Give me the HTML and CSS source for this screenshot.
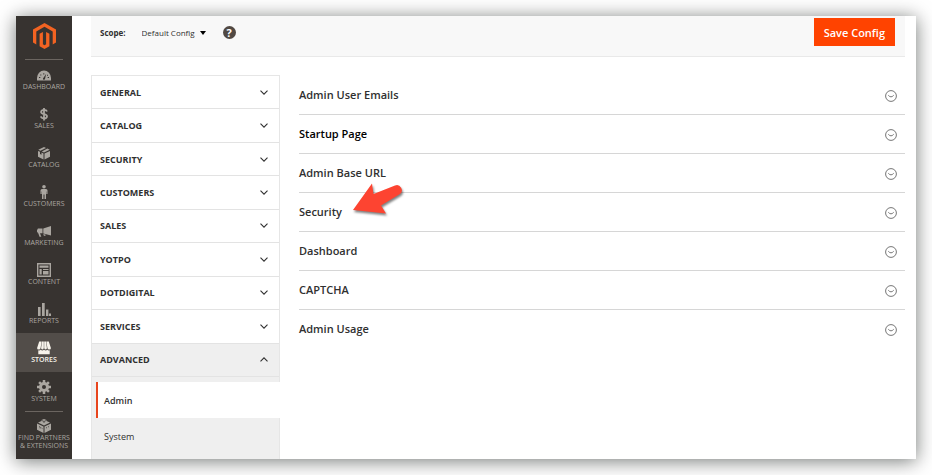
FILE: index.html
```html
<!DOCTYPE html>
<html lang="en">
<head>
<meta charset="utf-8">
<meta name="viewport" content="width=device-width, initial-scale=1">
<title>Configuration</title>
<link rel="stylesheet" href="styles.css">
</head>
<body>
<svg class="sprite" aria-hidden="true">
  <symbol id="down" viewBox="0 0 8 5"><path d="M.5 .7 4 4.2 7.5 .7" fill="none" stroke="currentColor" stroke-width="1.1"/></symbol>
  <symbol id="up" viewBox="0 0 8 5"><path d="M.5 4.3 4 .8 7.5 4.3" fill="none" stroke="currentColor" stroke-width="1.1"/></symbol>
  <symbol id="expand" viewBox="0 0 12 12"><g fill="none" stroke="currentColor" stroke-width=".9"><circle cx="6" cy="6" r="5.4"/><path d="M3.3 5.3Q6 8.4 8.7 5.3"/></g></symbol>
</svg>
<div class="frame">
  <nav class="menu" aria-label="Main">
    <a class="logo" href="#" aria-label="Magento">
      <svg viewBox="0 0 23 26"><path fill="#f26322" d="M11.5 0 23 6.6V19.500L19.700 21.400V8.500L11.500 3.800 3.300 8.500V21.400L0 19.500V6.600ZM9.900 9V21.300L11.500 22.300 13.100 21.300V9L16.400 10.700V23.200L11.500 26 6.600 23.200V10.700Z"/></svg>
    </a>
    <a class="item" href="#"><svg viewBox="0 0 14 14"><path d="M0 12.500V10A7 7.500 0 0 1 14 10V12.500Z"/><path class="cut" d="M6 10.400 9.200 5.800 8 11.100A1 1 0 0 1 6 10.400ZM2 9h1.300v1H2ZM10.700 9H12v1h-1.300ZM3.300 6.500h1v1h-1ZM6.300 5.200h1v1.200h-1ZM10 6.700h1v1h-1Z"/></svg>Dashboard</a>
    <a class="item" href="#"><svg viewBox="0 0 14 14"><path fill="none" stroke="currentColor" stroke-width="1.8" d="M10 4.600C9.600 3.300 8.500 2.800 7 2.800 5.200 2.800 4.100 3.600 4.100 4.900 4.100 7.700 10 6.300 10 9.200 10 10.600 8.800 11.400 7 11.400 5.300 11.400 4.200 10.700 3.900 9.400M7 1V13.400"/></svg>Sales</a>
    <a class="item" href="#"><svg viewBox="0 0 14 14"><path d="M7 1 9 1.900 3.400 4.700 1.300 3.800ZM10.400 2.500 12.700 3.800 7 6.500 4.800 5.400ZM1 4.900 3 5.800V8L4.500 8.700V6.500L6.500 7.500V13.500L1 10.700ZM13 4.900V10.700L7.500 13.500V7.500Z"/></svg>Catalog</a>
    <a class="item" href="#"><svg viewBox="0 0 14 14"><circle cx="7" cy="1.800" r="1.800"/><path d="M5 4H9Q10.500 4 10.500 5.500V9H9.300V6.500H9V14H7.500V9.500H6.500V14H5V6.500H4.700V9H3.500V5.500Q3.500 4 5 4Z"/></svg>Customers</a>
    <a class="item" href="#"><svg viewBox="0 0 14 14"><path d="M14 2V11.500L6.300 9.400V4.400ZM5.500 4.600V9.200H3L4.300 12.700H2.500L1.300 9.200H.8V8.300H0V5.600H.8V4.600Z"/><path d="M6.300 10 8.800 10.700 8.100 12 6.700 11.500Z"/></svg>Marketing</a>
    <a class="item" href="#"><svg viewBox="0 0 14 14"><path fill="none" stroke="currentColor" stroke-width="1.400" d="M.700 .700H13.300V13.300H.700Z"/><path d="M2.500 2.500H11.500V4.800H2.500ZM2.500 6H4.700V11.500H2.500ZM6 6H11.500V7H6ZM6 8H11.500V11.500H6Z"/></svg>Content</a>
    <a class="item" href="#"><svg viewBox="0 0 14 14"><path d="M1 5H3.600V14H1ZM5 1H7.700V14H5ZM9 7.500H11.400V14H9ZM12 11.500H14V14H12Z"/></svg>Reports</a>
    <a class="item current" href="#" aria-current="page"><svg viewBox="0 0 14 14"><path d="M2.200 .500H4.600L3.600 7Q3.400 8.500 1.700 8.500 0 8.500 .1 7ZM5 .500H6.800V7.100Q6.700 8.500 5.400 8.500 4 8.500 4.100 7.100ZM7.200 .500H9L9.900 7.100Q10 8.500 8.600 8.500 7.300 8.500 7.200 7.100ZM9.400 .500H11.800L13.900 7Q14 8.500 12.300 8.500 10.600 8.500 10.400 7ZM1.300 9.300Q3 9.600 3.600 8.800 5.300 10 7 8.800 8.700 10 10.400 8.800 11 9.600 12.700 9.300V13.200H1.300Z"/></svg>Stores</a>
    <a class="item" href="#"><svg viewBox="0 0 14 14"><circle cx="7" cy="7" r="3.500" fill="none" stroke="currentColor" stroke-width="3"/><path fill="none" stroke="currentColor" stroke-width="2.500" d="M7 0V3M7 11V14M0 7H3M11 7H14M2.100 2.100 4.200 4.200M9.800 9.800 11.900 11.900M11.900 2.100 9.800 4.200M4.200 9.800 2.100 11.900"/></svg>System</a>
    <a class="item partners" href="#"><svg viewBox="0 0 14 14"><path d="M7 0 9.500 1V2L13 3.600 7 6.500 1 3.600 4.500 2V1ZM0 4.500 6.500 7.500V14L0 10.800ZM14 4.500V10.800L7.500 14V7.500Z"/><path fill="none" stroke="#373330" stroke-width=".7" d="M4.600 1.400 7 2.500 9.400 1.400M7 2.500V4M2 7.500 3.200 8 3.200 9.500M4.500 9 5.500 9.600M9 9 10 8.500M11 8 12 7.500"/></svg>Find Partners<br>&amp; Extensions</a>
  </nav>
  <main class="page">
    <header class="toolbar">
      <label for="scope">Scope:</label>
      <span class="scope"><select id="scope"><option>Default Config</option></select></span>
      <button class="help" type="button" aria-label="Help">?</button>
      <button class="save" type="button">Save Config</button>
    </header>
    <div class="columns">
      <nav class="config" aria-label="Configuration">
        <div class="groups">
          <button type="button">General<svg><use href="#down"/></svg></button>
          <button type="button">Catalog<svg><use href="#down"/></svg></button>
          <button type="button">Security<svg><use href="#down"/></svg></button>
          <button type="button">Customers<svg><use href="#down"/></svg></button>
          <button type="button">Sales<svg><use href="#down"/></svg></button>
          <button type="button">Yotpo<svg><use href="#down"/></svg></button>
          <button type="button">dotdigital<svg><use href="#down"/></svg></button>
          <button type="button">Services<svg><use href="#down"/></svg></button>
          <button type="button" class="open" aria-expanded="true">Advanced<svg><use href="#up"/></svg></button>
        </div>
        <div class="pages">
          <a href="#" class="active" aria-current="page">Admin</a>
          <a href="#">System</a>
        </div>
      </nav>
      <section class="sections">
        <button type="button">Admin User Emails<svg><use href="#expand"/></svg></button>
        <button type="button" class="hovered">Startup Page<svg><use href="#expand"/></svg></button>
        <button type="button">Admin Base URL<svg><use href="#expand"/></svg></button>
        <div class="marked">
          <button type="button">Security<svg><use href="#expand"/></svg></button>
          <svg class="arrow" viewBox="0 0 54 36" aria-hidden="true"><path fill="#fd4431" d="M1 28 20 1.500 21.500 12 43 3.500A5 5 0 0 1 48 12L29 23.500 34 31.500Z"/></svg>
        </div>
        <button type="button">Dashboard<svg><use href="#expand"/></svg></button>
        <button type="button">CAPTCHA<svg><use href="#expand"/></svg></button>
        <button type="button">Admin Usage<svg><use href="#expand"/></svg></button>
      </section>
    </div>
  </main>
</div>
</body>
</html>
```
FILE: styles.css
```css
* { box-sizing: border-box; }
body {
  margin: 0;
  padding: 16px;
  background: #fff;
  color: #303030;
  font-family: "Open Sans", "Noto Sans", sans-serif;
  font-size: 9px;
}
button, select {
  margin: 0;
  padding: 0;
  border: 0;
  background: none;
  color: inherit;
  font: inherit;
}
a { color: inherit; text-decoration: none; }
.sprite { position: absolute; width: 0; height: 0; }
.frame {
  display: flex;
  min-height: calc(100vh - 32px);
  background: #fff;
  box-shadow: 0 2px 18px rgba(0, 10, 5, .55);
}

.menu {
  display: flex;
  flex-direction: column;
  flex: 0 0 56px;
  background: #373330;
  color: #aaa6a0;
}
.logo {
  display: flex;
  justify-content: center;
  height: 44px;
  margin: 0 9px;
  padding-top: 7px;
  border-bottom: 1px solid #6b6560;
}
.logo svg { width: 23px; height: 26px; }
.item {
  display: flex;
  flex-direction: column;
  align-items: center;
  height: 39px;
  padding-top: 8px;
  font-size: 7px;
  line-height: 8px;
  text-align: center;
  text-transform: uppercase;
  white-space: nowrap;
}
.item svg {
  width: 14px;
  height: 14px;
  margin-bottom: 1px;
  fill: currentColor;
}
.item .cut { fill: #373330; }
.item.current { background: #524d49; color: #f7f3eb; font-weight: 600; }
.partners { position: relative; height: 48px; }
.partners::before {
  content: "";
  position: absolute;
  top: 0;
  left: 9px;
  right: 9px;
  border-top: 1px solid #6b6560;
}

.page { flex: 1; min-width: 0; padding: 0 11px 0 19px; display: flex; flex-direction: column; }
.toolbar {
  display: flex;
  align-items: center;
  padding: 2px 10px 10px 9px;
  border-bottom: 1px solid #e9e9e9;
  background: #f8f8f8;
  font-size: 8px;
}
.toolbar label { font-weight: 700; }
.scope { position: relative; margin-left: 16px; }
.scope select { appearance: none; width: 64px; }
.scope::after {
  content: "";
  position: absolute;
  top: 50%;
  right: 0;
  border: 3px solid transparent;
  border-top: 4px solid #000;
  border-bottom: 0;
  margin-top: -1px;
}
.help {
  width: 13px;
  height: 13px;
  margin-left: 17px;
  border-radius: 50%;
  background: #514943;
  color: #fff;
  font-size: 11px;
  font-weight: 700;
  line-height: 13px;
}
.save {
  height: 28px;
  margin-left: auto;
  padding: 0 10px;
  background: #ff4300;
  color: #fff;
  font-size: 11px;
  font-weight: 600;
}

.columns { display: flex; flex: 1; gap: 19px; padding-top: 18px; }
.config {
  flex: 0 0 189px;
  display: flex;
  flex-direction: column;
  border: 1px solid #e6e6e6;
  border-bottom: 0;
  background: #efefef;
}
.groups {
  display: grid;
  grid-auto-rows: 1fr;
  min-height: 301px;
}
.groups button {
  display: flex;
  align-items: center;
  justify-content: space-between;
  padding: 0 11px 0 8px;
  border-bottom: 1px solid #e3e3e3;
  background: #fff;
  font-weight: 700;
  text-transform: uppercase;
}
.groups svg { width: 8px; height: 5px; }
.groups .open { background: #efefef; }
.pages { padding: 5px 0 0 4px; }
.pages a {
  display: flex;
  align-items: center;
  height: 36px;
  padding-left: 8px;
}
.pages .active {
  margin-right: -1px;
  padding-left: 6px;
  border-left: 2px solid #e8441c;
  background: #fff;
  font-weight: 600;
}

.sections { flex: 1; min-width: 0; padding-top: 1px; }
.sections button {
  display: flex;
  align-items: center;
  justify-content: space-between;
  width: 100%;
  height: 39px;
  padding: 0 8px 2px 0;
  border-bottom: 1px solid #d6d6d6;
  font-size: 11px;
  font-weight: 600;
}
.sections button svg { width: 12px; height: 12px; margin-top: 3px; color: #666; }
.sections .hovered { color: #000; }
.sections > button:last-child { border-bottom: 0; }
.marked { position: relative; }
.arrow {
  position: absolute;
  top: -11px;
  left: 53px;
  width: 54px;
  height: 36px;
  filter: drop-shadow(1px 2px 1px rgba(0, 0, 0, .5));
}
```
